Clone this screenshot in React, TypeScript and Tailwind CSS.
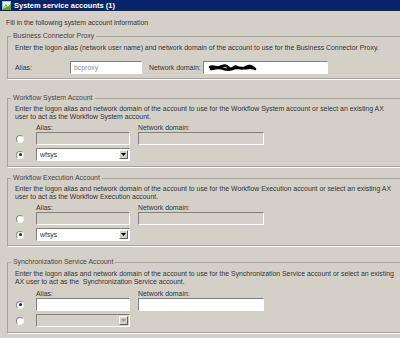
import React from "react";

const inputBase = "h-[13px] border border-t-[#808080] border-l-[#808080] border-b-white border-r-white";

function TextBox({ width, enabled, value, muted, children }: { width: string; enabled: boolean; value?: string; muted?: boolean; children?: React.ReactNode }) {
    return (
        <div className={`${inputBase} ${width} ${enabled ? "bg-white" : "bg-[#d4d0c8]"} flex items-center pl-[3px] overflow-hidden`}>
            {value && <span className={muted ? "text-[#8a8a8a]" : "text-[#222]"}>{value}</span>}
            {children}
        </div>
    );
}

function Combo({ enabled, value }: { enabled: boolean; value?: string }) {
    return (
        <div className={`${inputBase} w-[94px] ${enabled ? "bg-white" : "bg-[#d4d0c8]"} flex items-center justify-between pl-[3px] pr-[1px]`}>
            <span>{value}</span>
            <div className="w-[9px] h-[9px] bg-[#d4d0c8] border border-t-white border-l-white border-b-[#606060] border-r-[#606060] flex items-center justify-center">
                <svg width="5" height="3" viewBox="0 0 5 3">
                    <path d="M0 0h5L2.5 3z" fill={enabled ? "#000" : "#9a9a9a"} />
                </svg>
            </div>
        </div>
    );
}

function Radio({ checked }: { checked: boolean }) {
    return (
        <div className="w-[8px] h-[8px] rounded-full border border-t-[#8a8a8a] border-l-[#8a8a8a] border-b-[#f0f0f0] border-r-[#f0f0f0] bg-white flex items-center justify-center">
            {checked && <div className="w-[3px] h-[3px] rounded-full bg-[#222]" />}
        </div>
    );
}

interface AccountBoxProps {
    title: string;
    lines: string[];
    topGap: string;
    descGap: string;
    labelGap: string;
    bottomPad: string;
    aliasEnabled: boolean;
    comboEnabled: boolean;
    useCombo: boolean;
}

function AccountBox({ title, lines, topGap, descGap, labelGap, bottomPad, aliasEnabled, comboEnabled, useCombo }: AccountBoxProps) {
    return (
        <fieldset className={`${topGap} ml-[7px] mr-[-8px] p-0 border border-[#a6a39c] shadow-[1px_1px_0_white]`}>
            <legend className="ml-[3px] px-[2px] text-[#444]">{title}</legend>
            <div className={`pl-[7px] ${descGap} ${bottomPad}`}>
                {lines.map((l) => (
                    <div key={l} className="whitespace-pre">{l}</div>
                ))}
                <div className={`${labelGap} flex pl-[21px]`}>
                    <span className="w-[102px]">Alias:</span>
                    <span>Network domain:</span>
                </div>
                <div className="flex items-center">
                    <div className="ml-[1px] w-[20px]"><Radio checked={!useCombo} /></div>
                    <TextBox width="w-[94px]" enabled={aliasEnabled} />
                    <div className="w-[8px]" />
                    <TextBox width="w-[126px]" enabled={aliasEnabled} />
                </div>
                <div className="flex items-center mt-[3px]">
                    <div className="ml-[1px] w-[20px]"><Radio checked={useCombo} /></div>
                    <Combo enabled={comboEnabled} value={comboEnabled ? "wfsys" : undefined} />
                </div>
            </div>
        </fieldset>
    );
}

function WizardIcon() {
    return (
        <svg width="9" height="9" viewBox="0 0 9 9">
            <rect x="0" y="0" width="9" height="9" fill="#9cc3e6" />
            <rect x="1" y="1" width="7" height="5" fill="#dfeefb" />
            <path d="M0 9L4 3l2 3 3-4v7z" fill="#5aa33a" />
            <path d="M1 8l3-4 1 2z" fill="#f2d23a" />
        </svg>
    );
}

export default function App() {
    return (
        <div className="w-[400px] h-[338px] overflow-hidden bg-[#d4d0c8] font-['Liberation_Sans',Arial,sans-serif] text-[6.9px] leading-[8px] text-[#333]">
            <div className="h-[11px] bg-[#0a246a] flex items-center gap-[3px] pl-[2px]">
                <WizardIcon />
                <span className="text-white font-bold text-[7.5px]">System service accounts (1)</span>
            </div>
            <p className="pl-[6px] mt-[8px]">Fill in the following system account information</p>

            <fieldset className="mt-[5px] ml-[7px] mr-[-8px] p-0 border border-[#a6a39c] shadow-[1px_1px_0_white]">
                <legend className="ml-[3px] px-[2px] text-[#444]">Business Connector Proxy</legend>
                <div className="pl-[7px] mt-[4px] pb-[4px]">
                    <div className="whitespace-pre">Enter the logon alias (network user name) and network domain of the account to use for the Business Connector Proxy.</div>
                    <div className="flex items-center mt-[9px]">
                        <span className="w-[55px]">Alias:</span>
                        <TextBox width="w-[72px]" enabled value="bcproxy" muted />
                        <span className="ml-[7px] w-[54px]">Network domain:</span>
                        <TextBox width="w-[125px]" enabled>
                            <svg width="50" height="9" viewBox="0 0 50 9" className="ml-[1px]">
                                <path d="M2 4c4-2 6 2 10 0s6-2 9 1 5-3 8-1 6 2 9 0 5-1 9 2M3 6c5-1 8-2 13 0s7 0 12-1 8 1 12 0 4 1 6 0" stroke="#000" strokeWidth="2.6" fill="none" strokeLinecap="round" />
                            </svg>
                        </TextBox>
                    </div>
                </div>
            </fieldset>

            <AccountBox
                title="Workflow System Account"
                lines={[
                    "Enter the logon alias and network domain of the account to use for the Workflow System account or select an existing AX",
                    "user to act as the Workflow System account.",
                ]}
                topGap="mt-[15px]"
                descGap="mt-[3px]"
                labelGap="mt-[3px]"
                bottomPad="pb-[5px]"
                aliasEnabled={false}
                comboEnabled
                useCombo
            />
            <AccountBox
                title="Workflow Execution Account"
                lines={[
                    "Enter the logon alias and network domain of the account to use for the Workflow Execution account or select an existing AX",
                    "user to act as the Workflow Execution account.",
                ]}
                topGap="mt-[7px]"
                descGap="mt-[3px]"
                labelGap="mt-[3px]"
                bottomPad="pb-[4px]"
                aliasEnabled={false}
                comboEnabled
                useCombo
            />
            <AccountBox
                title="Synchronization Service Account"
                lines={[
                    "Enter the logon alias and network domain of the account to use for the Synchronization Service account or select an existing",
                    "AX user to act as the  Synchronization Service account.",
                ]}
                topGap="mt-[12px]"
                descGap="mt-[4px]"
                labelGap="mt-[4px]"
                bottomPad="pb-[5px]"
                aliasEnabled
                comboEnabled={false}
                useCombo={false}
            />
        </div>
    );
}
